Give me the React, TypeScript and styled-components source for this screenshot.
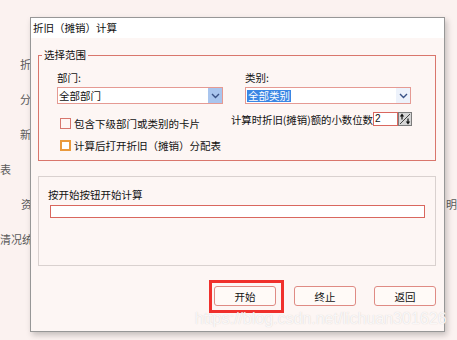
import styled, { createGlobalStyle } from 'styled-components';

const GlobalStyle = createGlobalStyle`
  html, body {
    margin: 0;
    padding: 0;
  }
  body {
    background: #fbf2f0;
    font-family: "Noto Sans CJK SC", "Liberation Sans", sans-serif;
    color: #111;
  }
`;

const Screen = styled.div`
  position: relative;
  width: 457px;
  height: 340px;
  overflow: hidden;
  background: #fbf2f0;
`;

// the page that sits behind the dialog
const BackPage = styled.div`
  display: flex;
  flex-direction: column;
  padding-top: 47px;
`;
const BackLine = styled.div<{ $indent: number }>`
  display: flex;
  height: 35px;
  line-height: 35px;
  padding-left: ${(p) => p.$indent}px;
  font-size: 11px;
  color: #5a5a5a;
  white-space: nowrap;
`;
const BackAside = styled.span`
  margin-left: auto;
  margin-right: 0;
`;

const Dialog = styled.div`
  position: absolute;
  left: 30px;
  top: 17px;
  width: 415px;
  height: 315px;
  box-sizing: border-box;
  border: 1px solid #979797;
  background: #fdf6f4;
  box-shadow: 2px 3px 6px rgba(0, 0, 0, 0.22);
  display: flex;
  flex-direction: column;
`;
const TitleBar = styled.div`
  height: 20px;
  padding-left: 2px;
  background: #fff;
  font-size: 10.5px;
  line-height: 20px;
`;
const Body = styled.div`
  display: flex;
  flex-direction: column;
  padding: 10px 8px 0 7px;
`;

const Group = styled.fieldset`
  margin: 0;
  padding: 0;
  min-width: 0;
  border: 1px solid #d9766c;
`;
const Legend = styled.legend`
  margin-left: 3px;
  padding: 0 2px;
  font-size: 10.5px;
  line-height: 14px;
`;
const GroupBody = styled.div`
  padding: 9px 23px 4px 18px;
`;
const TopGrid = styled.div`
  display: grid;
  grid-template-columns: 166px 166px;
  column-gap: 22px;
`;
const Field = styled.div`
  display: flex;
  flex-direction: column;
`;
const FieldLabel = styled.span`
  font-size: 10.5px;
  line-height: 14px;
  margin-bottom: 2px;
`;
const Select = styled.div`
  display: flex;
  align-items: stretch;
  height: 17px;
  box-sizing: border-box;
  border: 1px solid #e59a93;
  background: #fff;
`;
const SelectValue = styled.span`
  flex: 1;
  display: flex;
  align-items: center;
  padding-left: 1px;
  font-size: 10.5px;
`;
const Picked = styled.span`
  background: #3a86e4;
  color: #fff;
  line-height: 12px;
  padding: 0 1px;
`;
const SelectArrow = styled.span<{ $hot?: boolean }>`
  width: 14px;
  display: flex;
  align-items: center;
  justify-content: center;
  background: ${(p) => (p.$hot ? '#a9c5ee' : '#edf2fb')};
`;

const BottomRow = styled.div`
  display: flex;
  justify-content: space-between;
  margin-top: 8px;
`;
const Checks = styled.div`
  display: flex;
  flex-direction: column;
  padding-left: 3px;
`;
const CheckRow = styled.label`
  display: flex;
  align-items: center;
  gap: 3px;
  height: 22px;
  font-size: 10.5px;
`;
const Box = styled.span<{ $focus?: boolean }>`
  width: 11px;
  height: 11px;
  box-sizing: border-box;
  border: ${(p) => (p.$focus ? '2px solid #ea9a3c' : '1px solid #d7766d')};
  background: ${(p) => (p.$focus ? '#fff' : '#fff6f4')};
`;
const SpinRow = styled.div`
  display: flex;
  align-items: flex-start;
`;
const SpinLabel = styled.span`
  font-size: 10.4px;
  line-height: 18px;
  margin-top: -1px;
`;
const SpinInput = styled.span`
  width: 25px;
  height: 14px;
  box-sizing: border-box;
  border: 1px solid #d9675e;
  background: #fff;
  font-family: "Liberation Sans", sans-serif;
  font-size: 10px;
  line-height: 12px;
  padding-left: 1px;
`;
const SpinButton = styled.span`
  width: 14px;
  height: 14px;
  display: flex;
  background: #d6d6d6;
`;

const RunGroup = styled.div`
  margin-top: 15px;
  height: 90px;
  box-sizing: border-box;
  border: 1px solid #d9d1cf;
  padding: 11px 10px 0 9px;
  display: flex;
  flex-direction: column;
`;
const RunLabel = styled.span`
  font-size: 10.5px;
  line-height: 14px;
`;
const Progress = styled.div`
  margin: 3px 0 0 2px;
  height: 13px;
  box-sizing: border-box;
  border: 1px solid #d9675e;
  background: #fff;
`;

const ButtonBar = styled.div`
  display: flex;
  justify-content: flex-end;
  gap: 18px;
  margin-top: 20px;
`;
const Button = styled.button`
  width: 62px;
  height: 20px;
  padding: 0;
  box-sizing: border-box;
  border: 1px solid #df8b84;
  border-radius: 3px;
  background: #fffaf7;
  font-family: inherit;
  font-size: 10.5px;
  color: #111;
`;
const Marked = styled.span`
  position: relative;
  display: flex;
  &::after {
    content: '';
    position: absolute;
    inset: -6px -8px -7px -5px;
    border: 3px solid #f0302c;
  }
`;

const Watermark = styled.div`
  position: absolute;
  left: 195px;
  top: 309px;
  font-family: "Liberation Sans", Arial, sans-serif;
  font-size: 16px;
  line-height: 20px;
  color: rgba(255, 255, 255, 0.85);
  text-shadow: 0 0 1px rgba(150, 140, 140, 0.4);
  white-space: nowrap;
`;

const Chevron = () => (
  <svg width="9" height="6" viewBox="0 0 9 6">
    <polyline points="1,1 4.5,4.5 8,1" fill="none" stroke="#3a5286" strokeWidth="1.4" />
  </svg>
);

const SpinGlyph = () => (
  <svg width="14" height="14" viewBox="0 0 14 14">
    <rect x="0.5" y="0.5" width="13" height="13" fill="none" stroke="#7c7c7c" />
    <line x1="2" y1="12" x2="12" y2="2" stroke="#444" />
    <polygon points="4,1.5 1.8,4.5 6.2,4.5" fill="#111" />
    <line x1="4" y1="4" x2="4" y2="7.5" stroke="#111" strokeWidth="1.2" />
    <polygon points="10,12.5 7.8,9.5 12.2,9.5" fill="#111" />
    <line x1="10" y1="6.5" x2="10" y2="10" stroke="#111" strokeWidth="1.2" />
  </svg>
);

export default function App() {
  return (
    <Screen>
      <GlobalStyle />
      <BackPage>
        <BackLine $indent={20}>折旧</BackLine>
        <BackLine $indent={20}>分配</BackLine>
        <BackLine $indent={20}>新增</BackLine>
        <BackLine $indent={0}>表</BackLine>
        <BackLine $indent={21}>
          资产
          <BackAside>明</BackAside>
        </BackLine>
        <BackLine $indent={0}>清况统计</BackLine>
      </BackPage>

      <Dialog>
        <TitleBar>折旧（摊销）计算</TitleBar>
        <Body>
          <Group>
            <Legend>选择范围</Legend>
            <GroupBody>
              <TopGrid>
                <Field>
                  <FieldLabel>部门:</FieldLabel>
                  <Select>
                    <SelectValue>全部部门</SelectValue>
                    <SelectArrow $hot>
                      <Chevron />
                    </SelectArrow>
                  </Select>
                </Field>
                <Field>
                  <FieldLabel>类别:</FieldLabel>
                  <Select>
                    <SelectValue>
                      <Picked>全部类别</Picked>
                    </SelectValue>
                    <SelectArrow>
                      <Chevron />
                    </SelectArrow>
                  </Select>
                </Field>
              </TopGrid>
              <BottomRow>
                <Checks>
                  <CheckRow>
                    <Box />
                    包含下级部门或类别的卡片
                  </CheckRow>
                  <CheckRow>
                    <Box $focus />
                    计算后打开折旧（摊销）分配表
                  </CheckRow>
                </Checks>
                <SpinRow>
                  <SpinLabel>计算时折旧(摊销)额的小数位数</SpinLabel>
                  <SpinInput>2</SpinInput>
                  <SpinButton>
                    <SpinGlyph />
                  </SpinButton>
                </SpinRow>
              </BottomRow>
            </GroupBody>
          </Group>

          <RunGroup>
            <RunLabel>按开始按钮开始计算</RunLabel>
            <Progress />
          </RunGroup>

          <ButtonBar>
            <Marked>
              <Button>开始</Button>
            </Marked>
            <Button>终止</Button>
            <Button>返回</Button>
          </ButtonBar>
        </Body>
      </Dialog>

      <Watermark>https://blog.csdn.net/lichuan301626</Watermark>
    </Screen>
  );
}
